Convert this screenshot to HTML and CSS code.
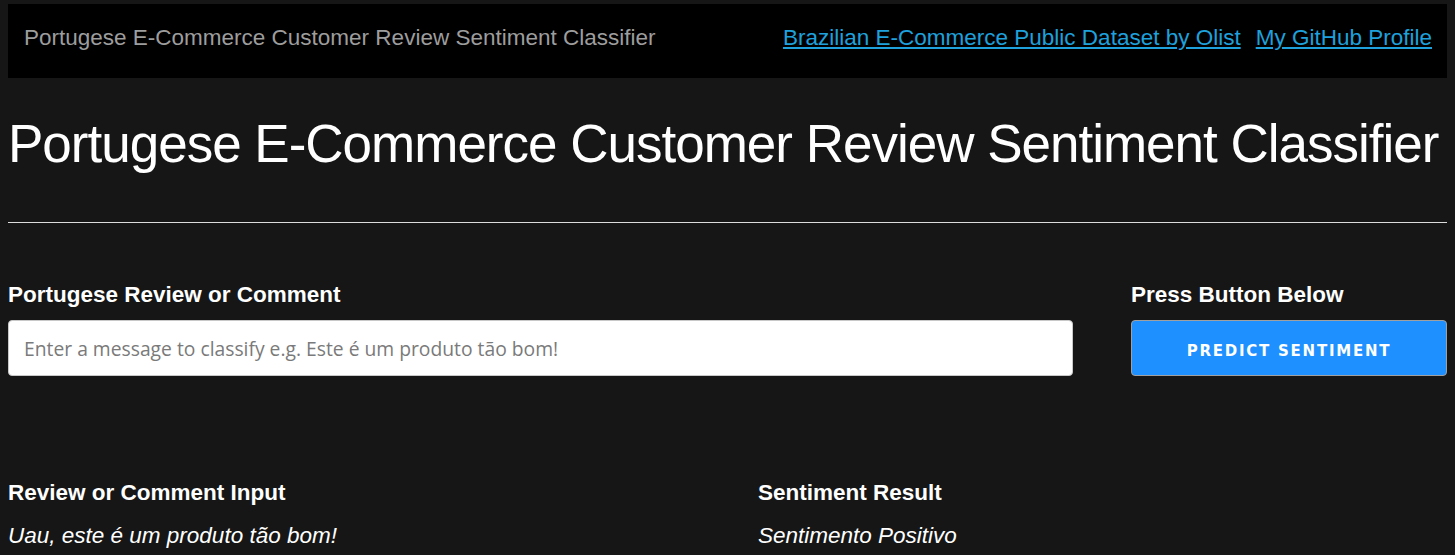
FILE: index.html
```html
<!DOCTYPE html>
<html lang="en">
<head>
<meta charset="utf-8">
<title>Portugese E-Commerce Customer Review Sentiment Classifier</title>
<link rel="stylesheet" href="styles.css">
</head>
<body>
<nav class="navbar">
  <span class="brand">Portugese E-Commerce Customer Review Sentiment Classifier</span>
  <div class="links">
    <a href="#">Brazilian E-Commerce Public Dataset by Olist</a>
    <a href="#">My GitHub Profile</a>
  </div>
</nav>
<h1 class="title">Portugese E-Commerce Customer Review Sentiment Classifier</h1>
<hr class="rule">
<div class="form-row">
  <div class="field">
    <label class="label" for="msg">Portugese Review or Comment</label>
    <input id="msg" class="text-input" type="text" placeholder="Enter a message to classify e.g. Este é um produto tão bom!">
  </div>
  <div class="field">
    <span class="label">Press Button Below</span>
    <button class="predict" type="button">PREDICT SENTIMENT</button>
  </div>
</div>
<div class="results">
  <div class="result">
    <h3 class="result-head">Review or Comment Input</h3>
    <p class="result-text">Uau, este é um produto tão bom!</p>
  </div>
  <div class="result">
    <h3 class="result-head">Sentiment Result</h3>
    <p class="result-text">Sentimento Positivo</p>
  </div>
</div>
</body>
</html>
```
FILE: styles.css
```css
html, body {
  background: #161616;
}
body {
  margin: 0;
  padding: 4px 8px 0 8px;
  font-family: "Liberation Sans", Arial, sans-serif;
  color: #ffffff;
}
.navbar {
  box-sizing: border-box;
  background: #000000;
  height: 74px;
  display: flex;
  align-items: center;
  justify-content: space-between;
  padding: 0 15px 7px 16px;
}
.brand {
  color: #9d9d9d;
  font-size: 22.5px;
}
.links {
  display: flex;
  gap: 15px;
}
.links a {
  color: #1ea1dc;
  font-size: 22.5px;
  text-decoration: underline;
}
.title {
  font-size: 53px;
  letter-spacing: -1px;
  font-weight: normal;
  white-space: nowrap;
  margin: 34px 0 0 0;
  line-height: 64px;
}
.rule {
  border: 0;
  border-top: 1px solid #dcdcdc;
  margin: 46px 0 0 0;
  height: 0;
}
.form-row {
  display: grid;
  grid-template-columns: 1065px 1fr;
  column-gap: 58px;
  margin-top: 59px;
}
.field {
  display: flex;
  flex-direction: column;
}
.label {
  font-weight: bold;
  font-size: 22.5px;
  line-height: 26px;
  margin-bottom: 12px;
}
.text-input {
  box-sizing: border-box;
  height: 56px;
  border: 1px solid #c8c8c8;
  border-radius: 4px;
  background: #ffffff;
  padding: 0 15px;
  font-family: "Open Sans", "Noto Sans", sans-serif;
  font-size: 19.3px;
  color: #333;
  outline: none;
}
.text-input::placeholder {
  color: #7a7a7a;
}
.predict {
  box-sizing: border-box;
  height: 56px;
  border: 1px solid #a0a0a0;
  border-radius: 4px;
  background: #1e90ff;
  color: #ffffff;
  font-family: "DejaVu Sans", Verdana, sans-serif;
  font-weight: bold;
  font-size: 15px;
  letter-spacing: 1.75px;
  padding: 5px 0 0 0;
  cursor: pointer;
}
.results {
  display: grid;
  grid-template-columns: 750px 1fr;
  margin-top: 104px;
}
.result-head {
  font-size: 22.5px;
  font-weight: bold;
  margin: 0;
  line-height: 26px;
}
.result-text {
  font-size: 22.5px;
  font-style: italic;
  margin: 17px 0 0 0;
  line-height: 26px;
}
```
